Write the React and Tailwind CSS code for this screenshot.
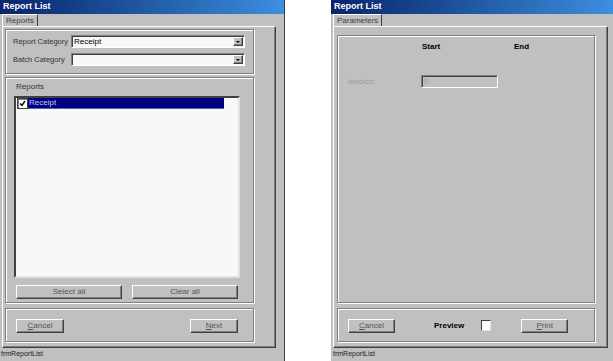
const raised = 'border border-t-white border-l-white border-r-[#404040] border-b-[#404040] shadow-[inset_-1px_-1px_0_#808080]'
const sunken = 'border border-t-[#808080] border-l-[#808080] border-b-white border-r-white shadow-[inset_1px_1px_0_#404040]'
const etched = 'border border-[#808080] shadow-[1px_1px_0_#fff,inset_1px_1px_0_#fff]'

function TitleBar() {
  return (
    <div className="h-[14px] shrink-0 flex items-center pl-[3px] bg-linear-to-r from-[#0a246a] to-[#3d8fdf] text-white font-bold text-[9px]">
      Report List
    </div>
  )
}

function Tab({ children }) {
  return (
    <div className="h-[12px] shrink-0 flex items-end pl-[2px]">
      <div className="h-[12px] px-[3px] flex items-center border-t border-l border-r border-t-white border-l-white border-r-[#404040] text-[8px] text-[#404040]">
        {children}
      </div>
    </div>
  )
}

function Btn({ children, className }) {
  return (
    <div className={`${raised} h-[14px] flex items-center justify-center text-[8px] text-[#555] ${className}`}>
      {children}
    </div>
  )
}

function Select({ value }) {
  return (
    <div className={`${sunken} w-[174px] h-[13px] shrink-0 bg-[#f8f8f8] flex items-center`}>
      <span className="flex-1 pl-[2px] text-[8px] text-black leading-none">{value}</span>
      <div className={`${raised} w-[10px] h-[9px] mr-[1px] bg-[#c0c0c0] flex items-center justify-center`}>
        <div className="w-0 h-0 border-l-[2px] border-r-[2px] border-t-[2px] border-l-transparent border-r-transparent border-t-black" />
      </div>
    </div>
  )
}

function StatusBar() {
  return (
    <div className="h-[13px] shrink-0 flex items-center pl-[1px] text-[7px] text-[#202020]">frmReportList</div>
  )
}

function ReportsWindow() {
  return (
    <div className="w-[285px] h-full flex flex-col bg-[#c0c0c0] border-r border-[#404040]">
      <TitleBar />
      <Tab>Reports</Tab>
      <div className="ml-[2px] w-[274px] h-[322px] shrink-0 flex flex-col pl-[2px] pt-[2px] border-t border-l border-t-white border-l-white border-r border-b border-r-[#404040] border-b-[#404040] shadow-[inset_-1px_-1px_0_#808080]">
        <div className={`${etched} w-[249px] h-[45px] flex flex-col gap-[5px] pt-[5px] pl-[7px]`}>
          <div className="flex items-center h-[13px]">
            <span className="w-[58px] shrink-0 whitespace-nowrap text-[7.5px] text-[#333]">Report Category</span>
            <Select value="Receipt" />
          </div>
          <div className="flex items-center h-[13px]">
            <span className="w-[58px] shrink-0 whitespace-nowrap text-[7.5px] text-[#333]">Batch Category</span>
            <Select value="" />
          </div>
        </div>

        <div className={`${etched} mt-[3px] w-[249px] h-[226px] flex flex-col pt-[4px]`}>
          <div className="h-[10px] leading-[10px] pl-[10px] text-[8px] text-[#333]">Reports</div>
          <div className="mt-[4px] ml-[8px] w-[226px] h-[182px] bg-[#f8f8f8] border-2 border-t-[#404040] border-l-[#404040] border-r-[#e0e0e0] border-b-[#e0e0e0] pl-[1px]">
            <div className="flex items-center h-[11px]">
              <div className="w-[11px] h-[11px] bg-white border border-[#404040] shadow-[inset_1px_1px_0_#808080] flex items-center justify-center">
                <svg width="7" height="7" viewBox="0 0 7 7">
                  <path d="M1 3.5 L3 5.5 L6 1" stroke="#000" strokeWidth="1.4" fill="none" />
                </svg>
              </div>
              <div className="w-[196px] h-[11px] bg-[#000080] text-[8px] text-[#c8c8ff] pl-[1px] flex items-center border-b border-[#6060a0]">Receipt</div>
            </div>
          </div>
          <div className="mt-[7px] ml-[10px] flex gap-[10px]">
            <Btn className="w-[106px]">Select all</Btn>
            <Btn className="w-[106px]">Clear all</Btn>
          </div>
        </div>

        <div className={`${etched} mt-[5px] w-[249px] h-[34px] flex items-start pt-[10px] pl-[10px]`}>
          <Btn className="w-[48px]"><span><span className="underline">C</span>ancel</span></Btn>
          <Btn className="w-[48px] ml-[126px]"><span><span className="underline">N</span>ext</span></Btn>
        </div>
      </div>
      <StatusBar />
    </div>
  )
}

function ParamsWindow() {
  return (
    <div className="w-[282px] h-full flex flex-col bg-[#c0c0c0]">
      <TitleBar />
      <Tab>Parameters</Tab>
      <div className="ml-[2px] w-[275px] h-[322px] shrink-0 flex flex-col pl-[3px] pt-[8px] border-t border-l border-t-white border-l-white border-r border-b border-r-[#404040] border-b-[#404040] shadow-[inset_-1px_-1px_0_#808080]">
        <div className={`${etched} w-[258px] h-[268px] flex flex-col pt-[6px] pl-[10px]`}>
          <div className="flex h-[10px] items-center text-[8px] font-bold text-black">
            <span className="w-[74px]" />
            <span className="w-[92px]">Start</span>
            <span>End</span>
          </div>
          <div className="mt-[23px] flex items-center h-[13px]">
            <span className="w-[73px] text-[8px] text-[#9a9a9a]">Invoice:</span>
            <div className={`${sunken} w-[77px] h-[13px] bg-[#c0c0c0] flex items-center pl-[2px] text-[8px] text-[#9a9a9a]`}>0</div>
          </div>
        </div>
        <div className={`${etched} mt-[5px] w-[258px] h-[34px] flex items-start pt-[10px] pl-[10px]`}>
          <Btn className="w-[47px]"><span><span className="underline">C</span>ancel</span></Btn>
          <span className="ml-[39px] h-[14px] flex items-center text-[8px] font-bold text-black">Preview</span>
          <div className="ml-[17px] mt-[1px] w-[10px] h-[11px] bg-white border border-t-[#404040] border-l-[#404040] border-r-[#e0e0e0] border-b-[#e0e0e0]" />
          <Btn className="w-[47px] ml-[30px]"><span><span className="underline">P</span>rint</span></Btn>
        </div>
      </div>
      <div className="h-[13px] shrink-0 flex items-center pl-[2px] text-[7px] text-[#202020]">frmReportList</div>
    </div>
  )
}

export default function App() {
  return (
    <div className="w-[613px] h-[361px] flex justify-between bg-white overflow-hidden font-['Liberation_Sans',Arial,sans-serif]">
      <ReportsWindow />
      <ParamsWindow />
    </div>
  )
}
